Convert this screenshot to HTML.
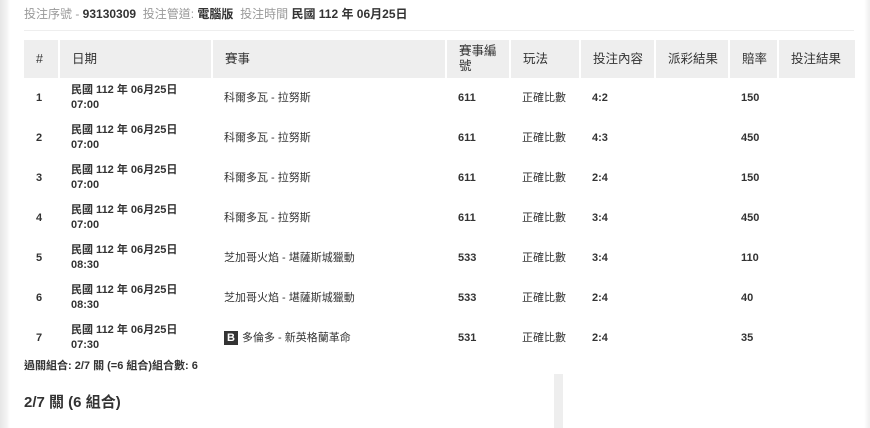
<!DOCTYPE html>
<html><head><meta charset="utf-8"><style>
body{margin:0;width:870px;height:428px;overflow:hidden;background:#fff;font-family:"Liberation Sans","Noto Sans CJK TC",sans-serif;font-size:12px;color:#333;position:relative}
.ls{position:absolute;left:0;top:0;width:10px;height:428px;background:linear-gradient(to right,#e6e6e6,#f4f4f4 70%,#fff)}
.rs{position:absolute;right:0;top:0;width:6px;height:428px;background:linear-gradient(to right,#fff,#eee)}
.top{position:absolute;left:24px;top:5px;font-size:12px;color:#999}
.top b{color:#333}
.hr{position:absolute;left:24px;width:830px;top:30px;border-top:1px solid #eee}
table{position:absolute;left:24px;top:40px;width:831px;border-collapse:collapse;table-layout:fixed}
th{background:#eee;font-weight:normal;text-align:left;height:38px;padding:0 0 0 12px;border-left:2px solid #fff;color:#333;line-height:15px;font-size:12.5px;white-space:nowrap}
th:first-child{border-left:none}
td{height:40px;padding:0 0 0 12px;font-weight:bold;font-size:11px;line-height:15px}
td.n{font-weight:normal}
.B{display:inline-block;background:#333;color:#fff;font-weight:bold;padding:0 3px;font-size:11px;line-height:14px;margin-right:4px}
.sum{position:absolute;left:24px;top:357px;font-weight:bold;font-size:11px}
.h2{position:absolute;left:24px;top:391px;font-weight:bold;font-size:15px}
.bar{position:absolute;left:554px;top:374px;width:9px;height:54px;background:#eee}
</style></head><body>
<div class="ls"></div><div class="rs"></div>
<div class="top">投注序號 - <b>93130309</b> &nbsp;投注管道: <b>電腦版</b> &nbsp;投注時間 <b>民國 112 年 06月25日</b></div>
<div class="hr"></div>
<table>
<colgroup><col style="width:35px"><col style="width:153px"><col style="width:234px"><col style="width:64px"><col style="width:70px"><col style="width:75px"><col style="width:74px"><col style="width:49px"><col style="width:77px"></colgroup>
<tr><th>#</th><th>日期</th><th>賽事</th><th>賽事編<br>號</th><th>玩法</th><th>投注內容</th><th>派彩結果</th><th>賠率</th><th>投注結果</th></tr>
<tr><td>1</td><td>民國 112 年 06月25日<br>07:00</td><td class="n">科爾多瓦 - 拉努斯</td><td>611</td><td class="n">正確比數</td><td>4:2</td><td></td><td>150</td><td></td></tr>
<tr><td>2</td><td>民國 112 年 06月25日<br>07:00</td><td class="n">科爾多瓦 - 拉努斯</td><td>611</td><td class="n">正確比數</td><td>4:3</td><td></td><td>450</td><td></td></tr>
<tr><td>3</td><td>民國 112 年 06月25日<br>07:00</td><td class="n">科爾多瓦 - 拉努斯</td><td>611</td><td class="n">正確比數</td><td>2:4</td><td></td><td>150</td><td></td></tr>
<tr><td>4</td><td>民國 112 年 06月25日<br>07:00</td><td class="n">科爾多瓦 - 拉努斯</td><td>611</td><td class="n">正確比數</td><td>3:4</td><td></td><td>450</td><td></td></tr>
<tr><td>5</td><td>民國 112 年 06月25日<br>08:30</td><td class="n">芝加哥火焰 - 堪薩斯城獵動</td><td>533</td><td class="n">正確比數</td><td>3:4</td><td></td><td>110</td><td></td></tr>
<tr><td>6</td><td>民國 112 年 06月25日<br>08:30</td><td class="n">芝加哥火焰 - 堪薩斯城獵動</td><td>533</td><td class="n">正確比數</td><td>2:4</td><td></td><td>40</td><td></td></tr>
<tr><td>7</td><td>民國 112 年 06月25日<br>07:30</td><td class="n"><span class="B">B</span>多倫多 - 新英格蘭革命</td><td>531</td><td class="n">正確比數</td><td>2:4</td><td></td><td>35</td><td></td></tr>
</table>
<div class="sum">過關組合: 2/7 關 (=6 組合)組合數: 6</div>
<div class="h2">2/7 關 (6 組合)</div>
<div class="bar"></div>
</body></html>
